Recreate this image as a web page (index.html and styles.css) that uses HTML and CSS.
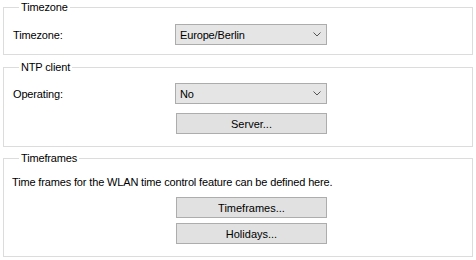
FILE: index.html
```html
<!DOCTYPE html>
<html lang="en">
<head>
  <meta charset="UTF-8">
  <title>Time settings</title>
  <link rel="stylesheet" href="styles.css">
</head>
<body>
  <fieldset class="group g1">
    <legend>Timezone</legend>
    <div class="row">
      <label>Timezone:</label>
      <div class="combo"><span>Europe/Berlin</span><svg width="8" height="5" viewBox="0 0 8 5"><path d="M0.5 0.5 L4 4 L7.5 0.5" fill="none" stroke="#555" stroke-width="1"/></svg></div>
    </div>
  </fieldset>

  <fieldset class="group g2">
    <legend>NTP client</legend>
    <div class="row">
      <label>Operating:</label>
      <div class="combo"><span>No</span><svg width="8" height="5" viewBox="0 0 8 5"><path d="M0.5 0.5 L4 4 L7.5 0.5" fill="none" stroke="#555" stroke-width="1"/></svg></div>
    </div>
    <div class="row btn-row">
      <button class="btn">Server...</button>
    </div>
  </fieldset>

  <fieldset class="group g3">
    <legend>Timeframes</legend>
    <p class="desc">Time frames for the WLAN time control feature can be defined here.</p>
    <div class="row btn-row first">
      <button class="btn">Timeframes...</button>
    </div>
    <div class="row btn-row second">
      <button class="btn">Holidays...</button>
    </div>
  </fieldset>
</body>
</html>
```

FILE: styles.css
```css
* { margin:0; padding:0; box-sizing:border-box; }
body { background:#fff; color:#000; font-family:"Liberation Sans", Arial, sans-serif; font-size:11px; letter-spacing:-0.15px; width:476px; height:260px; overflow:hidden; }
/* Groups */
.group { border:1px solid #dcdcdc; margin:0 3px; padding:0 0 12px 9px; }
.group legend { margin-left:6px; padding:0 2px; line-height:14px; height:14px; }
.g1 { padding-bottom:9px; }
.g2 { margin-top:5px; }
.g3 { margin-top:4px; }
/* Rows */
.row { display:flex; align-items:center; height:21px; margin-top:9px; }
.g1 .row { margin-top:10px; }
.row label { width:162px; }
.btn-row { padding-left:163px; }
.g3 .btn-row.first { margin-top:8px; }
.g3 .btn-row.second { margin-top:5px; }
.desc { line-height:14px; margin-top:10px; margin-left:-1px; }
/* Controls */
.combo { width:152px; height:21px; background:#e5e5e5; border:1px solid #acacac; display:flex; align-items:center; justify-content:space-between; padding:0 5px 0 4px; }
.combo svg { display:block; }
.btn { width:151px; height:21px; background:#e1e1e1; border:1px solid #adadad; font:inherit; color:#000; text-align:center; }
```
